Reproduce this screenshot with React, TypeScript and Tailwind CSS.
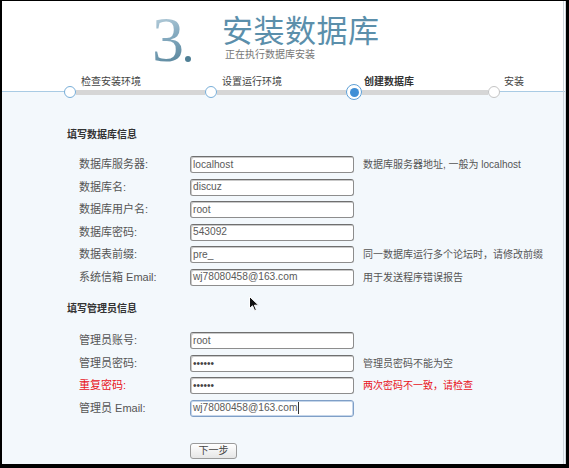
import React from "react";

const dbRows = [
  { label: "数据库服务器:", value: "localhost", hint: "数据库服务器地址, 一般为 localhost" },
  { label: "数据库名:", value: "discuz", hint: "" },
  { label: "数据库用户名:", value: "root", hint: "" },
  { label: "数据库密码:", value: "543092", hint: "" },
  { label: "数据表前缀:", value: "pre_", hint: "同一数据库运行多个论坛时，请修改前缀" },
  { label: "系统信箱 Email:", value: "wj78080458@163.com", hint: "用于发送程序错误报告" },
];

const adminRows = [
  { label: "管理员账号:", value: "root", hint: "", error: false, pwd: false, focus: false },
  { label: "管理员密码:", value: "••••••", hint: "管理员密码不能为空", error: false, pwd: true, focus: false },
  { label: "重复密码:", value: "••••••", hint: "两次密码不一致，请检查", error: true, pwd: true, focus: false },
  { label: "管理员 Email:", value: "wj78080458@163.com", hint: "", error: false, pwd: false, focus: true },
];

function Field({
  value,
  pwd,
  focus,
}: {
  value: string;
  pwd?: boolean;
  focus?: boolean;
}) {
  return (
    <div
      className={
        "h-[17px] w-[164px] rounded-[3px] border bg-white pl-[2px] flex items-center text-[#5a5a5a] " +
        (focus
          ? "border-[#7f9fc7] shadow-[inset_0_0_0_1px_#c5d6ea]"
          : "border-[#8d8d8d] border-t-[#6f6f6f] shadow-[inset_1px_1px_0_#c9c9c9]")
      }
    >
      <span className={pwd ? "text-[10px] text-[#444]" : "text-[10.2px]"}>
        {value}
      </span>
      {focus && <span className="ml-[1px] h-[12px] w-px bg-[#333]" />}
    </div>
  );
}

function Dot({ grey }: { grey?: boolean }) {
  return (
    <div
      className={
        "h-[12px] w-[12px] shrink-0 rounded-full border-[1.5px] bg-white " +
        (grey ? "border-[#c4c4c4]" : "border-[#78aed8]")
      }
    />
  );
}

export default function App() {
  return (
    <div className="relative h-[468px] w-[569px] bg-black pl-[2px] pr-[3px] pt-[1px] pb-[4px]">
      <div
        className="h-full overflow-hidden border-r-[3px] border-double border-[#cdd5dc] bg-[linear-gradient(to_bottom,#ffffff_0,#ffffff_90px,#a9cbe4_90px,#a9cbe4_91px,#f3f8fc_91px,#f3f8fc_100%)] text-[11px] text-[#555]"
        style={{ fontFamily: '"Liberation Sans", "Noto Sans CJK SC", sans-serif' }}
      >
        {/* title */}
        <div className="flex h-[70px] items-start pl-[150px] pt-[7px]">
          <div className="flex items-end">
            <span
              className="block bg-[linear-gradient(160deg,#c9dbe5_0%,#86abc0_45%,#4a7a91_100%)] bg-clip-text text-[64px] leading-none text-transparent"
              style={{ fontFamily: '"Liberation Serif", serif' }}
            >
              3
            </span>
            <span className="mb-[10px] ml-[1px] h-[6px] w-[6px] rounded-full bg-[#4f7f95]" />
          </div>
          <div className="ml-[31px] flex flex-col pt-[3px]">
            <span
              className="text-[31px] leading-[36px] tracking-[0.5px] text-[#5b8fab]"
              style={{ fontFamily: '"Noto Sans CJK SC", sans-serif' }}
            >
              安装数据库
            </span>
            <span className="ml-[3px] mt-[2px] text-[10px] leading-[12px] text-[#777]">
              正在执行数据库安装
            </span>
          </div>
        </div>

        {/* steps */}
        <div className="flex h-[13px] items-start pt-[5px] text-[10px] leading-[12px] text-[#444]">
          <span className="ml-[79px] w-[141px]">检查安装环境</span>
          <span className="w-[142px]">设置运行环境</span>
          <span className="w-[140px] font-bold text-[#333]">创建数据库</span>
          <span>安装</span>
        </div>
        <div className="flex h-[16px] items-center">
          <div className="w-[62px] shrink-0" />
          <Dot />
          <div className="h-[5px] w-[129px] shrink-0 bg-[#d6d6d6]" />
          <Dot />
          <div className="h-[5px] w-[129px] shrink-0 bg-[#d6d6d6]" />
          <div className="flex h-[16px] w-[16px] shrink-0 items-center justify-center rounded-full border-[1.5px] border-[#5d9fd6] bg-white">
            <div className="h-[9px] w-[9px] rounded-full bg-[#3f8fd6]" />
          </div>
          <div className="h-[5px] w-[126px] shrink-0 bg-[#d6d6d6]" />
          <Dot grey />
        </div>

        {/* database section */}
        <div className="ml-[65px] mt-[29px] text-[10px] font-bold leading-[12px] text-[#333]">
          填写数据库信息
        </div>
        <div className="mt-[15px] grid auto-rows-[22.5px] grid-cols-[111px_164px_auto] items-start pl-[77px]">
          {dbRows.map((r) => (
            <React.Fragment key={r.label}>
              <span className="leading-[17px]">{r.label}</span>
              <Field value={r.value} />
              <span className="pl-[9px] text-[10px] leading-[17px]">{r.hint}</span>
            </React.Fragment>
          ))}
        </div>

        {/* admin section */}
        <div className="ml-[65px] mt-[12px] text-[10px] font-bold leading-[12px] text-[#333]">
          填写管理员信息
        </div>
        <div className="mt-[17px] grid auto-rows-[22.5px] grid-cols-[111px_164px_auto] items-start pl-[77px]">
          {adminRows.map((r) => (
            <React.Fragment key={r.label}>
              <span className={"leading-[17px] " + (r.error ? "text-[#e8141b]" : "")}>
                {r.label}
              </span>
              <Field value={r.value} pwd={r.pwd} focus={r.focus} />
              <span
                className={
                  "pl-[9px] text-[10px] leading-[17px] " +
                  (r.error ? "text-[#e8141b]" : "")
                }
              >
                {r.hint}
              </span>
            </React.Fragment>
          ))}
        </div>

        <div className="ml-[188px] mt-[20px]">
          <button className="h-[16px] w-[47px] rounded-[3px] border border-[#9a9a9a] bg-[linear-gradient(to_bottom,#ffffff,#e6e6e6)] text-[10px] leading-[14px] text-[#444]">
            下一步
          </button>
        </div>
      </div>

      {/* mouse pointer */}
      <svg
        className="absolute left-[249px] top-[296px]"
        width="11"
        height="16"
        viewBox="0 0 11 16"
      >
        <path
          d="M0.5 0.5 L0.5 12.5 L3.5 9.8 L5.6 14.6 L7.4 13.8 L5.4 9.2 L9.6 9.2 Z"
          fill="#111"
          stroke="#fff"
          strokeWidth="1"
        />
      </svg>
    </div>
  );
}
